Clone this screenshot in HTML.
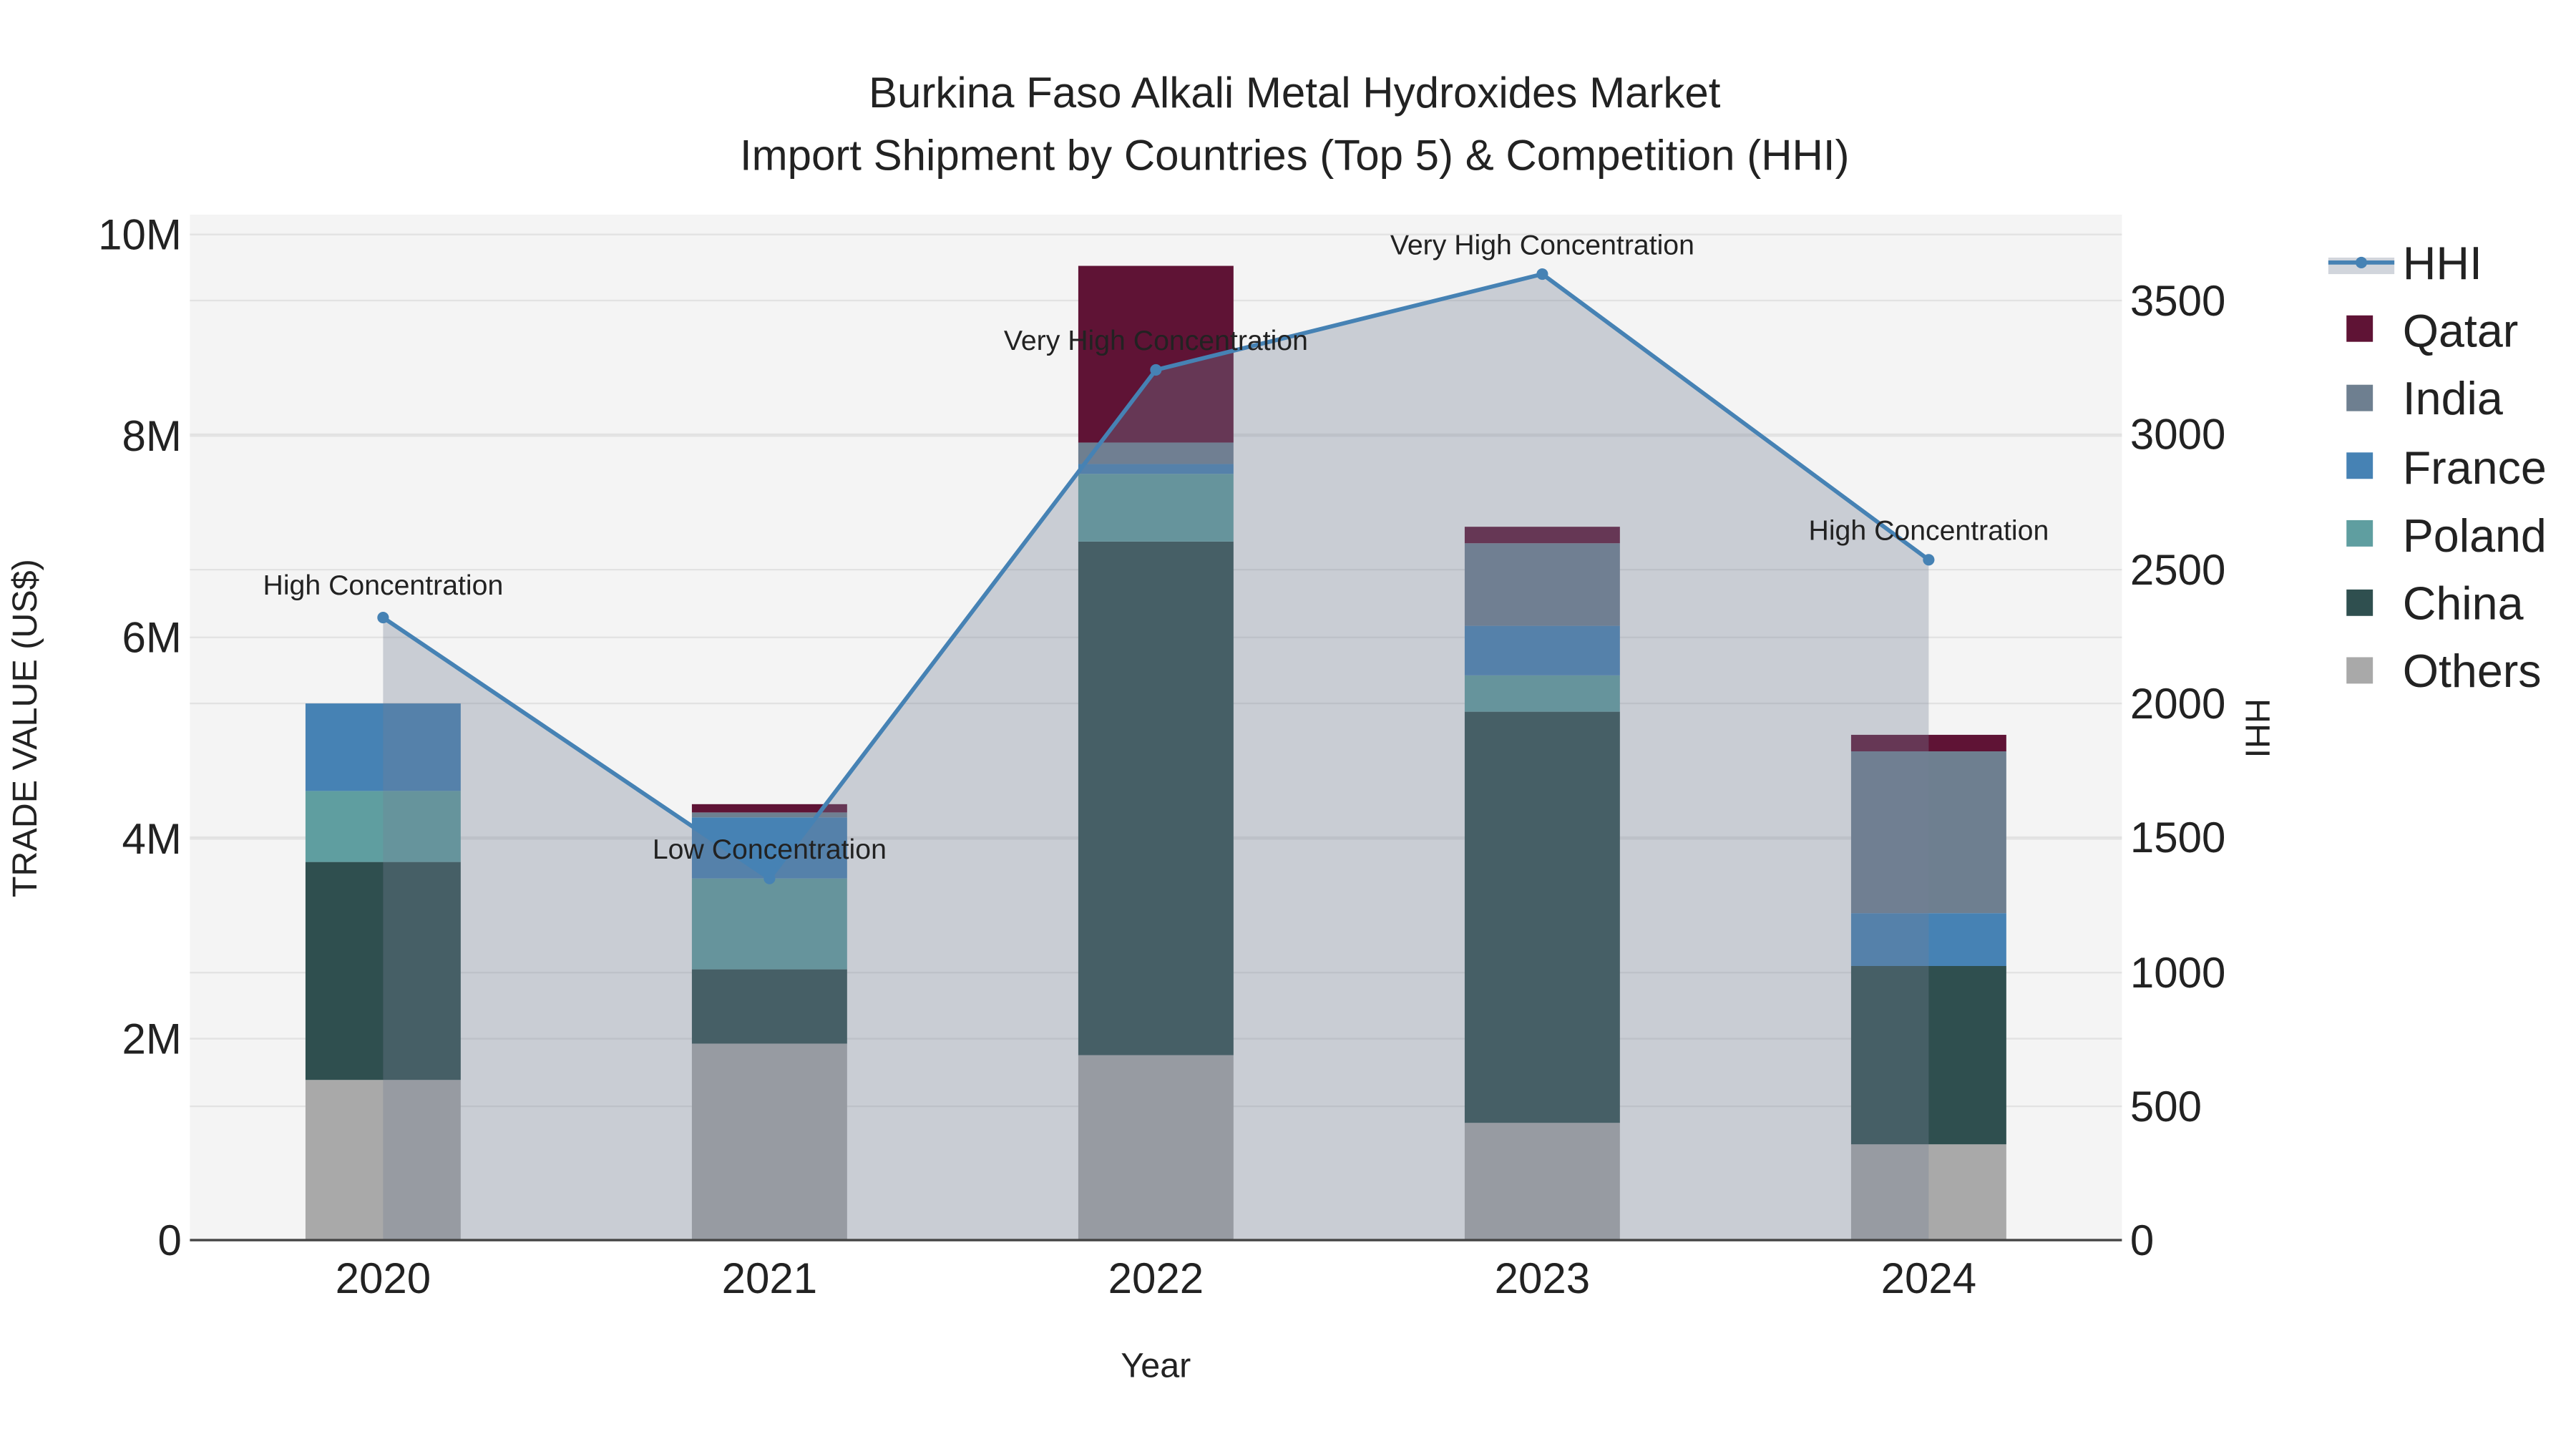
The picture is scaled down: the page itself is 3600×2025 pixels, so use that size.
<!DOCTYPE html>
<html><head><meta charset="utf-8"><style>
html,body{margin:0;padding:0;background:#fff;}
svg{display:block;}
text{font-family:"Liberation Sans",Arial,sans-serif;fill:#222;}
</style></head><body>
<svg width="3600" height="2025" viewBox="0 0 1560 877.5" xmlns="http://www.w3.org/2000/svg">
<rect width="1560" height="877.5" fill="#fff"/>
<rect x="115" y="130" width="1170" height="621" fill="#f4f4f4"/>
<g stroke="#e2e2e2" stroke-width="1">
<line x1="115" x2="1285" y1="142" y2="142"/><line x1="115" x2="1285" y1="264" y2="264"/>
<line x1="115" x2="1285" y1="386" y2="386"/><line x1="115" x2="1285" y1="508" y2="508"/>
<line x1="115" x2="1285" y1="629" y2="629"/>
<line x1="115" x2="1285" y1="182" y2="182"/><line x1="115" x2="1285" y1="263" y2="263"/>
<line x1="115" x2="1285" y1="345" y2="345"/><line x1="115" x2="1285" y1="426" y2="426"/>
<line x1="115" x2="1285" y1="507" y2="507"/><line x1="115" x2="1285" y1="589" y2="589"/>
<line x1="115" x2="1285" y1="670" y2="670"/>
</g>
<g>
<rect x="185" y="654" width="94" height="97" fill="#a9a9a9"/>
<rect x="185" y="522" width="94" height="132" fill="#2f4f4f"/>
<rect x="185" y="479" width="94" height="43" fill="#5f9ea0"/>
<rect x="185" y="426" width="94" height="53" fill="#4682b4"/>

<rect x="419" y="632" width="94" height="119" fill="#a9a9a9"/>
<rect x="419" y="587" width="94" height="45" fill="#2f4f4f"/>
<rect x="419" y="532" width="94" height="55" fill="#5f9ea0"/>
<rect x="419" y="495" width="94" height="37" fill="#4682b4"/>
<rect x="419" y="492" width="94" height="3" fill="#6e7f90"/>
<rect x="419" y="487" width="94" height="5" fill="#5f1335"/>

<rect x="653" y="639" width="94" height="112" fill="#a9a9a9"/>
<rect x="653" y="328" width="94" height="311" fill="#2f4f4f"/>
<rect x="653" y="287" width="94" height="41" fill="#5f9ea0"/>
<rect x="653" y="281" width="94" height="6" fill="#4682b4"/>
<rect x="653" y="268" width="94" height="13" fill="#6e7f90"/>
<rect x="653" y="161" width="94" height="107" fill="#5f1335"/>

<rect x="887" y="680" width="94" height="71" fill="#a9a9a9"/>
<rect x="887" y="431" width="94" height="249" fill="#2f4f4f"/>
<rect x="887" y="409" width="94" height="22" fill="#5f9ea0"/>
<rect x="887" y="379" width="94" height="30" fill="#4682b4"/>
<rect x="887" y="329" width="94" height="50" fill="#6e7f90"/>
<rect x="887" y="319" width="94" height="10" fill="#5f1335"/>

<rect x="1121" y="693" width="94" height="58" fill="#a9a9a9"/>
<rect x="1121" y="585" width="94" height="108" fill="#2f4f4f"/>
<rect x="1121" y="553" width="94" height="32" fill="#4682b4"/>
<rect x="1121" y="455" width="94" height="98" fill="#6e7f90"/>
<rect x="1121" y="445" width="94" height="10" fill="#5f1335"/>
</g>
<path d="M232,374 L466,532 L700,224 L934,166 L1168,339 L1168,751 L232,751 Z" fill="rgba(116,130,151,0.335)"/>
<polyline points="232,374 466,532 700,224 934,166 1168,339" fill="none" stroke="#4682b4" stroke-width="2.5"/>
<g fill="#4682b4"><circle cx="232" cy="374" r="3.5"/><circle cx="466" cy="532" r="3.5"/><circle cx="700" cy="224" r="3.5"/><circle cx="934" cy="166" r="3.5"/><circle cx="1168" cy="339" r="3.5"/></g>
<g font-size="17" text-anchor="middle">
<text x="232" y="360">High Concentration</text>
<text x="466" y="520">Low Concentration</text>
<text x="700" y="212">Very High Concentration</text>
<text x="934" y="154">Very High Concentration</text>
<text x="1168" y="327">High Concentration</text>
</g>
<line x1="115" x2="1285" y1="751" y2="751" stroke="#444" stroke-width="1.5"/>
<g font-size="26" text-anchor="end">
<text x="110" y="760">0</text><text x="110" y="638">2M</text><text x="110" y="517">4M</text>
<text x="110" y="395">6M</text><text x="110" y="273">8M</text><text x="110" y="151">10M</text>
</g>
<g font-size="26" text-anchor="start">
<text x="1290" y="760">0</text><text x="1290" y="679">500</text><text x="1290" y="598">1000</text>
<text x="1290" y="516">1500</text><text x="1290" y="435">2000</text><text x="1290" y="354">2500</text>
<text x="1290" y="272">3000</text><text x="1290" y="191">3500</text>
</g>
<g font-size="26" text-anchor="middle">
<text x="232" y="783">2020</text><text x="466" y="783">2021</text><text x="700" y="783">2022</text>
<text x="934" y="783">2023</text><text x="1168" y="783">2024</text>
</g>
<text x="700" y="834" font-size="21" text-anchor="middle">Year</text>
<text transform="translate(22,441) rotate(-90)" font-size="21" text-anchor="middle">TRADE VALUE (US$)</text>
<text transform="translate(1360,441) rotate(90)" font-size="21" text-anchor="middle">HHI</text>
<text x="784" y="65" font-size="26" text-anchor="middle">Burkina Faso Alkali Metal Hydroxides Market</text>
<text x="784" y="103" font-size="26" text-anchor="middle">Import Shipment by Countries (Top 5) &amp; Competition (HHI)</text>
<g font-size="28">
<rect x="1410" y="156" width="40" height="10" fill="rgba(116,130,151,0.335)"/>
<line x1="1410" x2="1450" y1="159" y2="159" stroke="#4682b4" stroke-width="2.5"/>
<circle cx="1430" cy="159" r="3.5" fill="#4682b4"/>
<text x="1455" y="169">HHI</text>
<rect x="1421" y="191" width="16" height="16" fill="#5f1335"/><text x="1455" y="210">Qatar</text>
<rect x="1421" y="233" width="16" height="16" fill="#6e7f90"/><text x="1455" y="251">India</text>
<rect x="1421" y="274" width="16" height="16" fill="#4682b4"/><text x="1455" y="293">France</text>
<rect x="1421" y="315" width="16" height="16" fill="#5f9ea0"/><text x="1455" y="334">Poland</text>
<rect x="1421" y="357" width="16" height="16" fill="#2f4f4f"/><text x="1455" y="375">China</text>
<rect x="1421" y="398" width="16" height="16" fill="#a9a9a9"/><text x="1455" y="416">Others</text>
</g>
</svg>
</body></html>
